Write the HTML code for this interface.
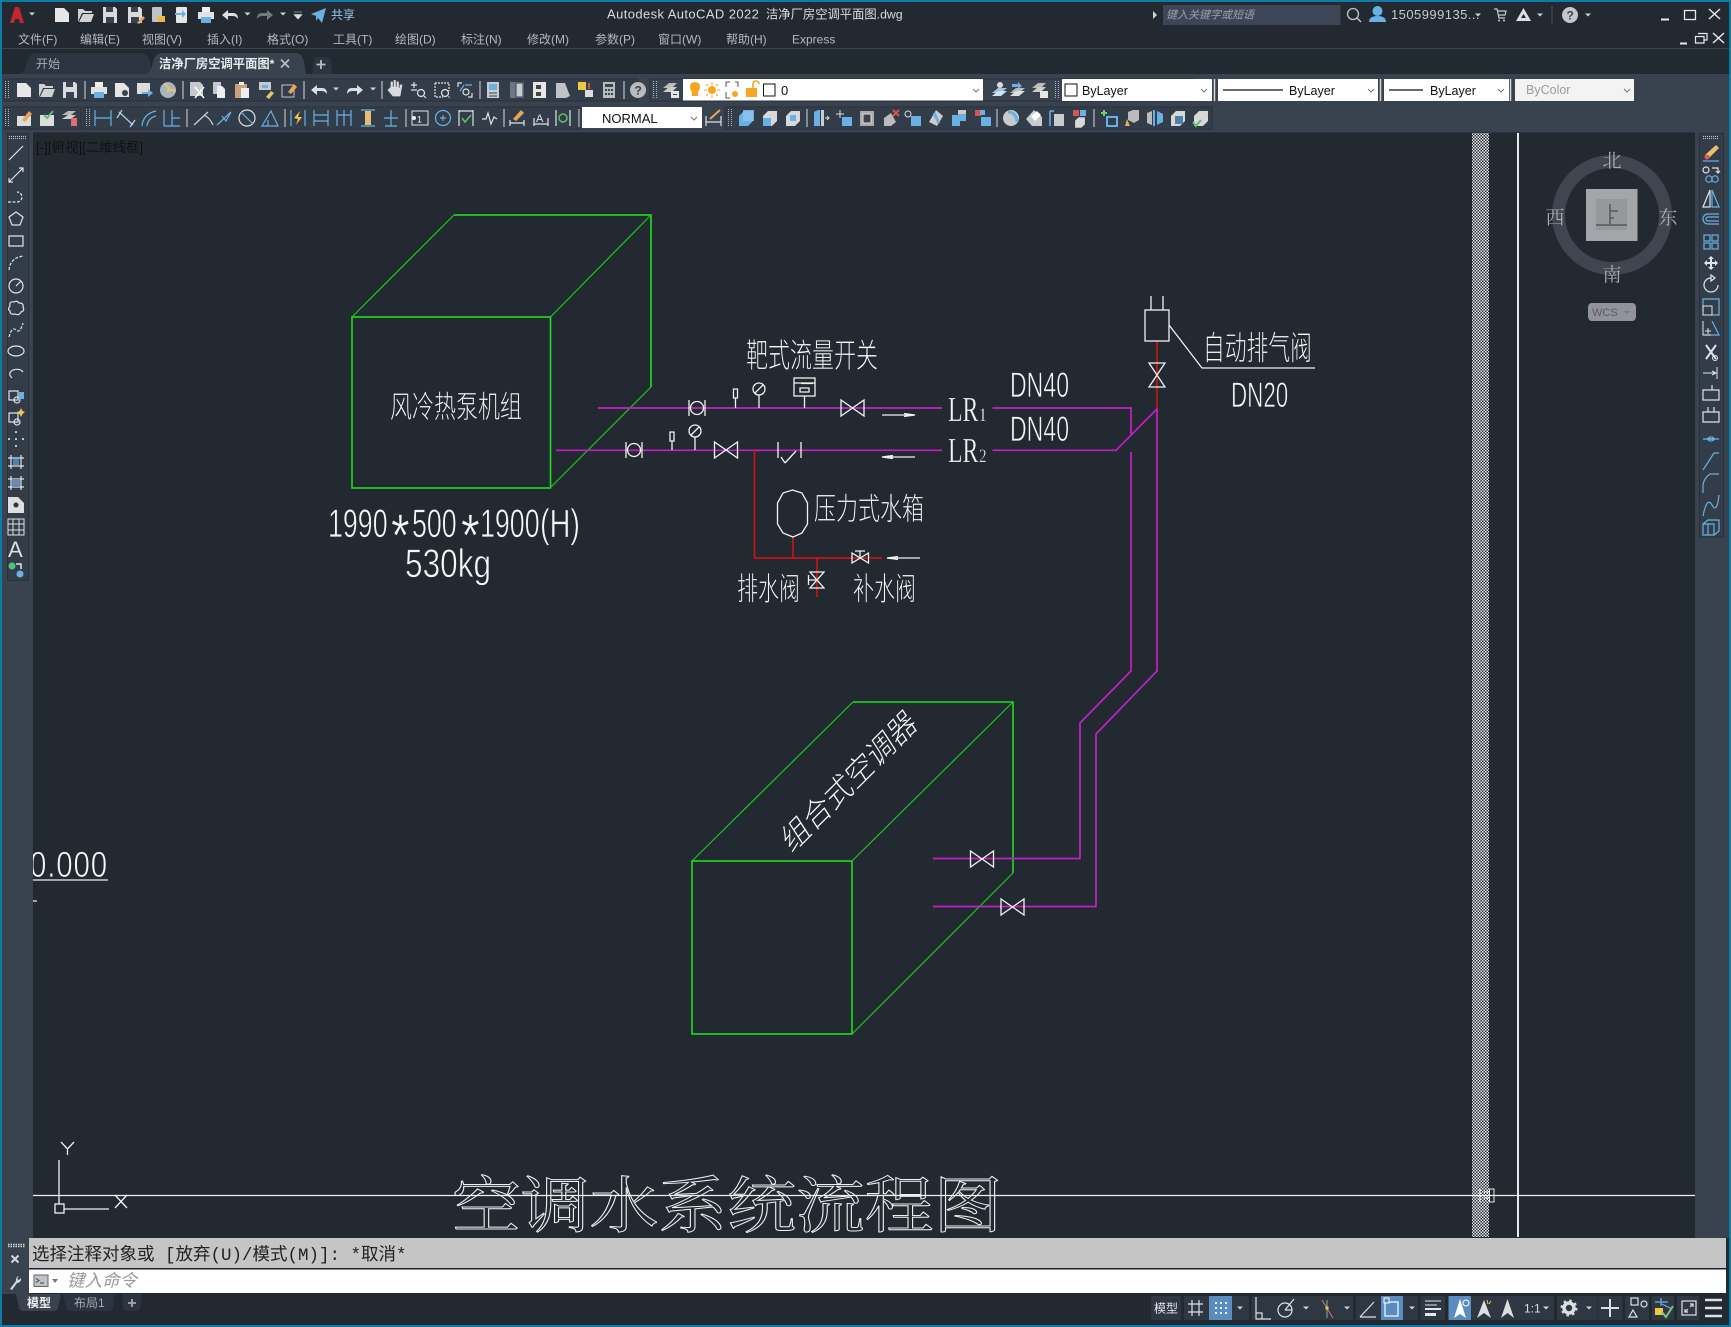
<!DOCTYPE html>
<html><head><meta charset="utf-8"><title>AutoCAD 2022</title>
<style>
html,body{margin:0;padding:0;background:#222931;width:1731px;height:1327px;overflow:hidden}
svg{display:block}
text{font-family:"Liberation Sans","Noto Sans CJK SC",sans-serif;white-space:pre}
.m{font-size:12px;fill:#b4b9c0}
.c{fill:#fff;font-family:"Noto Sans CJK SC","WenQuanYi Zen Hei",sans-serif;font-weight:200;stroke:#222931;stroke-width:.12}
.l{fill:#f6f6f6;font-family:"Liberation Sans",sans-serif;stroke:#222931;stroke-width:.7}
.s{fill:#f6f6f6;font-family:"Liberation Serif",serif;stroke:#222931;stroke-width:.3}
.i{fill:none;stroke:#dfe3e8;stroke-width:1.2}
.b{fill:none;stroke:#69b1e4;stroke-width:1.2}
.f{fill:#dcdee1}
.fb{fill:#69b1e4}
.g{fill:none;stroke:#1fdc1f;stroke-width:1.6}
.g2{fill:none;stroke:#1cc41c;stroke-width:1.2}
.p{fill:none;stroke:#c61ec6;stroke-width:1.7}
.r{fill:none;stroke:#c81414;stroke-width:1.7}
.w{fill:none;stroke:#f2f2f2;stroke-width:1.3}
.k{font-size:13.400px;fill:#111}
</style></head><body>
<svg xmlns="http://www.w3.org/2000/svg" width="1731" height="1327" viewBox="0 0 1731 1327">
<defs>
<pattern id="ht" width="3" height="3" patternUnits="userSpaceOnUse"><rect width="3" height="3" fill="#2a303a"/><rect width="1.5" height="1.5" fill="#e8e8e8"/><rect x="1.5" y="1.5" width="1.5" height="1.5" fill="#e8e8e8"/></pattern>
<path id="doc" d="M-7-7H2L7-2V7H-7Z" fill="#e6e6e6"/>
<path id="open" d="M-8 7V-6H-3L-1-4H6V-2H-4L-8 7ZM-7 7H5L8-1H-3Z" fill="#cfd1d4"/>
<g id="save"><path d="M-7-8H5L7-6V8H-7Z" fill="#d8dadd"/><rect x="-4" y="-8" width="7" height="5" fill="#39424f"/><rect x="-4" y="2" width="8" height="6" fill="#39424f"/></g>
<g id="print"><rect x="-4" y="-8" width="8" height="5" fill="#eee"/><rect x="-8" y="-3" width="16" height="7" fill="#e2e2e2"/><rect x="-5" y="2" width="10" height="6" fill="#69b1e4"/></g>
<path id="undo" d="M-8 0L-2-5V-2H3Q8-2 8 4Q6 1 3 1H-2V5Z" fill="#dcdee1"/>
<path id="redo" d="M8 0L2-5V-2H-3Q-8-2-8 4Q-6 1-3 1H2V5Z" fill="#dcdee1"/>
<path id="caret" d="M-3-1.5H3L0 1.5Z" fill="#cfd3d8"/>
<path id="chev" d="M-3-1L0 2L3-1" fill="none" stroke="#777"/>
<g id="grip"><path d="M-1.5-9V9M1.5-9V9" stroke="#aeb4bc" stroke-dasharray="1 1" fill="none"/></g>
<path id="cube" d="M-7-2L-2-7H7V3L2 8H-7Z" fill="#d8d8d8"/>
<path id="cubeb" d="M-7-2L-2-7H7V3L2 8H-7Z" fill="#69b1e4"/>
<path id="sep" d="M0-9V9" stroke="#d8dadd" stroke-width="1"/>
<g id="bow"><path d="M-11.5-8V8L11.5-8V8Z" fill="none" stroke="#f2f2f2" stroke-width="1.3"/></g>
</defs>

<rect width="1731" height="1327" fill="#222931"/>

<!-- CANVAS DRAWING -->
<g id="draw">
<rect x="1472" y="133" width="17" height="1104" fill="url(#ht)"/>
<path d="M1518 133V1237" stroke="#e8e8e8" stroke-width="2"/>
<path d="M33 1195.500H1695" stroke="#eee" stroke-width="1.300"/>
<rect x="1489.500" y="1189" width="4.500" height="13" fill="none" stroke="#eee"/>
<path d="M1480 1189V1202M1484 1192H1490M1484 1198H1490" stroke="#fff"/>

<!-- Box 1 -->
<rect x="352" y="317" width="198.500" height="171" class="g"/>
<path d="M352 317L454 215H651V387L550 488" class="g2"/>
<path d="M454 215H651V387" class="g"/>
<path d="M550.500 317L651 215" class="g2"/>
<!-- Box 2 -->
<rect x="692" y="861" width="160" height="173" class="g"/>
<path d="M692 861L853 702M852 861L1013 702M1013 873L852 1034" class="g2"/>
<path d="M853 702H1013V873" class="g"/>

<!-- Pipes -->
<path d="M598 408H942M992.500 408H1131V435M1131 452V671L1080 723V858.500H933" class="p"/>
<path d="M556 450.300H942M992.500 450.300H1116L1157 409V671L1096 734V906.500H933" class="p"/>
<path d="M754.500 450V558H882M793 537V558M817 558V597M1157 341V409" class="r"/>

<!-- Components -->
<g transform="translate(697,408)"><circle r="6.500" fill="#222931" class="w"/><path d="M-8-8V8M8-8V8" class="w"/></g>
<g transform="translate(634,450)"><circle r="6.500" fill="#222931" class="w"/><path d="M-8-8V8M8-8V8" class="w"/></g>
<g class="w">
<path d="M735.500 408V398M733.500 398V389H737.500V398ZM759 408V395M672 450V441M670 441V432H674V441ZM695 450V437"/>
<circle cx="759" cy="389" r="6"/><circle cx="695" cy="431" r="6"/>
<path d="M755 393L763 385M691 435L699 427"/>
<rect x="794" y="378" width="21" height="18"/><path d="M794 383H815M800 388H809V392H800ZM804.500 396V408M801 383.500H813"/>
<path d="M778 442V458M801 442V458M785 463L796 451M781 457L785 463"/>
<path d="M882 415H915M904 413.500L915 415L904 416.500M882 457H915M893 455.500L882 457L893 458.500M887 558H920M898 556.500L887 558L898 559.500"/>
<path d="M792.500 490L802 493L807.500 503V524L802 533L793 537L783 533L777.500 524V503L783 493Z"/>
<path d="M852 553V563L868.500 553V563ZM855 551H865M860 551V558"/>
<path d="M810 572H824L810 588H824L810 572ZM808.500 575V585M808.500 580H817"/>
<rect x="1145" y="310" width="24" height="31"/><path d="M1151 296V310M1163 296V310M1149 363H1165L1149 387H1165Z"/>
<path d="M1169 325L1202 368H1315"/>
</g>
<use href="#bow" x="852.500" y="408"/>
<use href="#bow" x="726" y="450"/>
<use href="#bow" x="982" y="859"/>
<use href="#bow" x="1012.500" y="907"/>

<!-- CAD text -->
<text class="c" transform="translate(746,367) scale(1,1.5)" font-size="22">靶式流量开关</text>
<text class="c" transform="translate(390,417.500) scale(1,1.4)" font-size="22">风冷热泵机组</text>
<text class="c" transform="translate(814,519.500) scale(1,1.4)" font-size="22">压力式水箱</text>
<text class="c" transform="translate(737,599.500) scale(1,1.5)" font-size="21">排水阀</text>
<text class="c" transform="translate(853,599.500) scale(1,1.5)" font-size="21">补水阀</text>
<text class="c" transform="translate(1203,359.500) scale(1,1.5)" font-size="21.800">自动排气阀</text>
<text class="c" transform="translate(855,790) rotate(-45) skewX(-12)" font-size="30" text-anchor="middle">组合式空调器</text>
<text class="l" transform="translate(1010,397) scale(.66,1)" font-size="35">DN40</text>
<text class="l" transform="translate(1010,441) scale(.66,1)" font-size="35">DN40</text>
<text class="l" transform="translate(1231,407) scale(.64,1)" font-size="35">DN20</text>
<text class="s" transform="translate(948,421) scale(.68,1)" font-size="35">LR</text>
<text class="s" transform="translate(979,421) scale(.8,1)" font-size="19">1</text>
<text class="s" transform="translate(948,462) scale(.68,1)" font-size="35">LR</text>
<text class="s" transform="translate(979,462) scale(.8,1)" font-size="19">2</text>
<text class="l" transform="translate(328,537) scale(.67,1)" font-size="40">1990</text>
<text class="l" transform="translate(391,556) scale(.8,1)" font-size="60">*</text>
<text class="l" transform="translate(412,537) scale(.67,1)" font-size="40">500</text>
<text class="l" transform="translate(461,556) scale(.8,1)" font-size="60">*</text>
<text class="l" transform="translate(480,537) scale(.67,1)" font-size="40">1900</text>
<text class="l" transform="translate(540,537) scale(.72,1)" font-size="40">(H)</text>
<text class="l" transform="translate(405,577) scale(.79,1)" font-size="40">530kg</text>
<text class="l" transform="translate(30,877) scale(.82,1)" font-size="36" letter-spacing="1">0.000</text>
<path d="M33 880H108M33 901H37" stroke="#eee" stroke-width="1.200"/>

<text transform="translate(452,1227) scale(1,.89)" font-size="68.800" fill="none" stroke="#f0f0f0" stroke-width="1.100" style="font-family:'Noto Serif CJK SC','Noto Sans CJK SC',serif">空调水系统流程图</text>

<!-- UCS -->
<path d="M59 1160V1204M64 1209H109M115 1195L127 1208M127 1195L115 1208M61 1142L67.500 1149L74 1142M67.500 1149V1155" class="w" stroke-width="1"/>
<rect x="55" y="1204" width="9" height="9" class="w"/>

<!-- Viewcube -->
<circle cx="1612" cy="215" r="53.500" fill="none" stroke="#3f4650" stroke-width="13"/>
<rect x="1586" y="189" width="51.500" height="52" fill="#a4a5a8"/>
<rect x="1596" y="199" width="31" height="31" fill="#97989c"/>
<path d="M1610 204V225M1596 225H1627M1610 211H1618M1610 218H1614" stroke="#55585e" stroke-width="1.500" fill="none"/>
<g font-size="19" text-anchor="middle">
<text x="1612" y="167" fill="#a8aaad" style="font-family:'Noto Serif CJK SC',serif">北</text>
<text x="1612" y="281" fill="#a8aaad" style="font-family:'Noto Serif CJK SC',serif">南</text>
<text x="1668" y="224" fill="#a8aaad" style="font-family:'Noto Serif CJK SC',serif">东</text>
<text x="1555" y="224" fill="#a8aaad" style="font-family:'Noto Serif CJK SC',serif">西</text>
</g>
<rect x="1588" y="303" width="48" height="18" rx="4" fill="#91929c"/>
<text x="1592" y="316" font-size="11" fill="#5b5d66">WCS</text>
<path d="M1623 311H1631L1627 314Z" fill="#7d7f88"/>

<text class="k" x="36" y="152">[-][俯视][二维线框]</text>
</g>

<!-- CHROME: frame & bars -->
<rect x="0" y="74" width="1731" height="59" fill="#39424f"/>
<rect x="2" y="133" width="31" height="1105" fill="#39424f"/>
<rect x="1695" y="133" width="34" height="1105" fill="#39424f"/>
<path d="M0 48.500H1731" stroke="#3d4551"/>
<rect x="33" y="132" width="1662" height="1" fill="#2c333e"/>

<!-- Title bar -->
<path d="M10 23L15 7H19L24 23H20L19 19H15L14 23Z" fill="#c4262b"/>
<use href="#caret" x="32" y="14"/>
<g transform="translate(62,15)"><use href="#doc"/></g>
<g transform="translate(86,15)"><use href="#open"/></g>
<g transform="translate(110,15)"><use href="#save"/></g>
<g transform="translate(135,15)"><use href="#save"/><path d="M2 8L8 1L10 3L4 9Z" fill="#e8a55a"/></g>
<g transform="translate(158,15)"><rect x="-6" y="-8" width="10" height="15" rx="1" fill="#bfc2c6"/><path d="M0 1H7V7H0Z" fill="#f3b73f"/></g>
<g transform="translate(182,15)"><rect x="-6" y="-8" width="11" height="16" rx="1" fill="#e6e6e6"/><path d="M-7-2H0V-5L4-1L0 3V0H-7Z" fill="#69b1e4"/></g>
<g transform="translate(206,15)"><use href="#print"/></g>
<g transform="translate(230,15)"><use href="#undo"/></g><use href="#caret" x="247.500" y="14"/>
<g transform="translate(265,15)" opacity=".45"><use href="#redo"/></g><use href="#caret" x="283" y="14"/>
<path d="M294 12H302M294 14.500H302L298 19Z" fill="#dcdee1" stroke="#dcdee1" stroke-width=".6"/>
<path d="M311 14L326 8L322 23L318 18L316 21V16Z" fill="#69b1e4"/>
<text x="331" y="19" font-size="12" fill="#98c8e8">共享</text>
<text x="607" y="18.500" font-size="13" fill="#d8dbdf" letter-spacing=".4">Autodesk AutoCAD 2022</text>
<text x="766" y="18.500" font-size="12.300" fill="#d8dbdf">洁净厂房空调平面图.dwg</text>
<path d="M1153 11L1157 15L1153 19Z" fill="#cfd3d8"/>
<rect x="1163" y="5" width="177.500" height="20" fill="#3d4656"/>
<text x="1166" y="18.500" font-size="11" font-style="italic" fill="#9aa1ab">键入关键字或短语</text>
<circle cx="1353" cy="14" r="5.500" fill="none" stroke="#c0c4c9" stroke-width="1.300"/><path d="M1357 18L1361 22" stroke="#c0c4c9" stroke-width="1.500"/>
<circle cx="1377.500" cy="11" r="5" class="fb"/><path d="M1369 22Q1369 16 1377.500 16Q1386 16 1386 22Z" class="fb"/>
<text x="1391" y="19" font-size="13" fill="#c6cacf" letter-spacing=".45">1505999135...</text>
<use href="#caret" x="1478" y="15"/>
<path d="M1494 9H1497L1499 18H1505M1498 11H1506L1505 15H1499" fill="none" stroke="#c6cacf" stroke-width="1.200"/><circle cx="1499" cy="20.500" r="1" fill="#c6cacf"/><circle cx="1504" cy="20.500" r="1" fill="#c6cacf"/>
<path d="M1523.500 8L1531 21H1516ZM1523.500 14L1521 18H1526Z" fill="#dcdee1" fill-rule="evenodd"/>
<use href="#caret" x="1540" y="15"/>
<path d="M1552 6V24" stroke="#4a525e"/>
<circle cx="1570" cy="15" r="8" fill="#c4c6ca"/><text x="1566.500" y="19.500" font-size="12" font-weight="bold" fill="#444">?</text>
<use href="#caret" x="1588" y="15"/>
<path d="M1661 19.500H1669" stroke="#e8e8e8" stroke-width="2"/>
<rect x="1684.500" y="10.500" width="11" height="9" fill="none" stroke="#e8e8e8" stroke-width="1.300"/>
<path d="M1709 9L1720 19M1720 9L1709 19" stroke="#e8e8e8" stroke-width="1.500"/>
<path d="M1680 43.500H1687" stroke="#e8e8e8" stroke-width="2"/>
<path d="M1698 33.500H1707V40H1704M1695.500 36.500H1704V43H1695.500Z" fill="none" stroke="#e8e8e8" stroke-width="1.200"/>
<path d="M1713 33L1724 43M1724 33L1713 43" stroke="#e8e8e8" stroke-width="1.500"/>

<!-- Menu -->
<text class="m" x="18" y="43.500">文件(F)</text><text class="m" x="80" y="43.500">编辑(E)</text>
<text class="m" x="142" y="43.500">视图(V)</text><text class="m" x="207" y="43.500">插入(I)</text>
<text class="m" x="267" y="43.500">格式(O)</text><text class="m" x="333" y="43.500">工具(T)</text>
<text class="m" x="395" y="43.500">绘图(D)</text><text class="m" x="461" y="43.500">标注(N)</text>
<text class="m" x="527" y="43.500">修改(M)</text><text class="m" x="595" y="43.500">参数(P)</text>
<text class="m" x="658" y="43.500">窗口(W)</text><text class="m" x="726" y="43.500">帮助(H)</text>
<text class="m" x="792" y="43.500">Express</text>

<!-- Doc tabs -->
<path d="M18 74Q24 74 26 66Q28 53 36 53H140Q148 53 150 62L152 74Z" fill="#2c3441"/>
<text x="36" y="68" font-size="12" fill="#a6abb2">开始</text>
<path d="M144 74Q150 74 152 66Q154 53 162 53H296Q302 53 304 62L306 74Z" fill="#39424f"/>
<text x="159" y="68" font-size="12.300" font-weight="bold" fill="#e8eaec">洁净厂房空调平面图*</text>
<path d="M281 59.500L289 67.500M289 59.500L281 67.500" stroke="#b8bcc2" stroke-width="1.800"/>
<path d="M312 74L314 60Q315 57 318 57H326Q330 57 331 60L332 74Z" fill="#2c3441"/>
<path d="M316.500 64.500H325.500M321 60V69" stroke="#b8bcc2" stroke-width="1.800"/>

<!-- Toolbar panels -->
<g fill="#333c49" stroke="#2a303a">
<rect x="4" y="79" width="634" height="22"/><rect x="4" y="107" width="77" height="22"/>
<rect x="84" y="107" width="496" height="22"/><rect x="725" y="107" width="487" height="22"/>
<rect x="650" y="79" width="546" height="22" fill="none"/>
</g>
<use href="#grip" x="7" y="90"/><use href="#grip" x="7" y="118"/><use href="#grip" x="88" y="118"/><use href="#grip" x="655" y="90"/><use href="#grip" x="730" y="118"/><use href="#grip" x="1057" y="90"/>

<!-- Row 1 icons -->
<g transform="translate(24,90)"><use href="#doc"/></g>
<g transform="translate(47,90)"><use href="#open"/></g>
<g transform="translate(70,90)"><use href="#save"/></g>
<use href="#sep" x="85" y="90"/>
<g transform="translate(99,90)"><use href="#print"/></g>
<g transform="translate(122,90)"><use href="#doc"/><circle cx="3" cy="3" r="3.500" fill="#39424f" stroke="#ddd"/></g>
<g transform="translate(144,90)"><rect x="-7" y="-7" width="13" height="11" fill="#ddd"/><path d="M-2 2H4V-1L9 3L4 7V4H-2Z" fill="#69b1e4"/></g>
<g transform="translate(168,90)"><circle r="8" fill="#a9b5bf"/><path d="M-4-6Q2-4 0 1Q6-2 7 2" stroke="#e9c46a" fill="none" stroke-width="2"/></g>
<use href="#sep" x="183" y="90"/>
<g transform="translate(197,90)"><path d="M-7-8H3L6-5V6H-7Z" fill="#c6c8cc"/><path d="M-2 8L7-3M7 8L-2-3" stroke="#fff" stroke-width="1.500"/></g>
<g transform="translate(219,90)"><path d="M-6-8H2V4H-6Z" fill="#c6c8cc"/><path d="M-2-4H3L6-1V8H-2Z" fill="#eee"/></g>
<g transform="translate(242,90)"><rect x="-7" y="-6" width="12" height="14" fill="#c9a277"/><rect x="-3" y="-8" width="5" height="3" fill="#eee"/><rect x="-1" y="-2" width="8" height="10" fill="#eee"/></g>
<g transform="translate(266,90)"><path d="M-7-8H5V0H-7Z" fill="#c6c8cc"/><rect x="-4" y="-5" width="6" height="3" fill="#69b1e4"/><path d="M0 7L5 1L8 3L3 9Z" fill="#e8c46a"/></g>
<g transform="translate(289,90)"><rect x="-7" y="-5" width="12" height="12" fill="none" stroke="#c6c8cc"/><path d="M-1 2L5-6L8-3L2 4Z" fill="#e8a55a"/></g>
<use href="#sep" x="304" y="90"/>
<g transform="translate(319,90)"><use href="#undo"/></g><use href="#caret" x="336" y="89"/>
<g transform="translate(355,90)"><use href="#redo"/></g><use href="#caret" x="373" y="89"/>
<use href="#sep" x="382" y="90"/>
<path d="M388 90L391 87V82H392.500V87H394V80.500H395.500V87H397V82H398.500V88H400V85L402 85L400 96H393Z" fill="#d8dade" stroke="#d8dade" stroke-width=".7"/>
<g transform="translate(418,90)" class="i"><path d="M-7-5H-1M-4-8V-2M-7 0H-1"/><circle cx="3" cy="3" r="3.500"/><path d="M6 6L8 8"/></g>
<g transform="translate(442,90)" class="i"><path d="M-7-7H7V1M-7-7V7H1" stroke-dasharray="2 1"/><circle cx="3" cy="3" r="3.500"/><path d="M6 6L8 8" stroke="#69b1e4"/></g>
<g transform="translate(465,90)" class="i"><path d="M-7-3V-7H-3M3 7H7V3"/><circle cx="1" cy="2" r="3"/><path d="M-5 1L-1-5M7-5H0" stroke="#69b1e4"/></g>
<use href="#sep" x="480" y="90"/>
<g transform="translate(493,90)"><rect x="-6" y="-8" width="12" height="16" fill="#c8cbcf"/><rect x="-4" y="-6" width="8" height="6" fill="#69b1e4"/><path d="M-4 3H4M-4 6H4" stroke="#39424f"/></g>
<g transform="translate(517,90)"><rect x="-7" y="-8" width="14" height="16" fill="#6f7782"/><path d="M-1 -7H6V7H-1Z" fill="#c8cbcf" stroke="#39424f"/></g>
<g transform="translate(540,90)"><rect x="-7" y="-8" width="13" height="16" fill="#e6e6e6"/><path d="M-4-5H1V-1H-4ZM-4 2H1V6H-4Z" fill="#444"/></g>
<g transform="translate(563,90)"><path d="M-7-7H2L7 6L3 8H-7Z" fill="#bfc2c6"/></g>
<g transform="translate(586,90)"><rect x="-8" y="-8" width="8" height="8" fill="#efc74a"/><rect x="-1" y="0" width="8" height="7" fill="#ddd"/><path d="M3 -7V-1" stroke="#c9534a" stroke-width="2"/></g>
<g transform="translate(609,90)"><rect x="-6" y="-8" width="12" height="16" fill="#b8bbbf"/><path d="M-4-6H4V-3H-4ZM-4-1H-2V1H-4ZM-1-1H1V1H-1ZM2-1H4V1H2ZM-4 3H-2V5H-4ZM-1 3H1V5H-1ZM2 3H4V5H2Z" fill="#39424f"/></g>
<use href="#sep" x="624" y="90"/>
<circle cx="638" cy="90" r="8" fill="#b8bbbf"/><text x="634.500" y="94.500" font-size="12" font-weight="bold" fill="#39424f">?</text>
<g transform="translate(671,90)"><path d="M-8-2L-2-7H6L1-2Z" fill="#bbb"/><path d="M-8 2L-2-3H6L1 2Z" fill="#ccc"/><rect x="0" y="1" width="8" height="7" fill="#e6e6e6"/><path d="M2 4.500H6" stroke="#444"/></g>

<!-- Layer combo -->
<rect x="683" y="79" width="300" height="21.500" fill="#fff"/>
<path d="M695 82Q700 82 700 87Q700 90 698 92V96H692V92Q690 90 690 87Q690 82 695 82Z" fill="#f6a623"/>
<circle cx="712" cy="90" r="4" fill="#f6a623"/><path d="M712 82V85M712 95V98M704 90H707M717 90H720M706 84L708 86M716 94L718 96M718 84L716 86M708 94L706 96" stroke="#f6a623"/>
<path d="M726 87V82H730M735 82H738V87M726 92V98H730" fill="none" stroke="#555"/><circle cx="735" cy="94" r="3" fill="#f6a623"/>
<rect x="746" y="88" width="11" height="9" fill="#f6a623"/><path d="M753 88V84Q753 81 756 81Q759 81 759 84" fill="none" stroke="#f6a623" stroke-width="1.600"/>
<rect x="763.500" y="84" width="11.500" height="12" fill="#fff" stroke="#111"/>
<text x="781" y="95" font-size="13" fill="#111">0</text>
<use href="#chev" x="976" y="90"/>
<g transform="translate(1000,90)"><path d="M-8 3L-2-2H7L1 3Z" fill="#9cc7ea"/><path d="M-8 6L-2 1H7L1 6Z" fill="#cfe2f2"/><circle cx="0" cy="-5" r="3" fill="#ddd"/></g>
<g transform="translate(1018,90)"><path d="M-8 3L-2-2H7L1 3Z" fill="#bbb"/><path d="M-8 6L-2 1H7L1 6Z" fill="#ddd"/><path d="M-6-6H0V-8L4-4L0-1V-3H-6Z" fill="#69b1e4"/></g>
<g transform="translate(1040,90)"><path d="M-8-2L-2-7H6L1-2Z" fill="#bbb"/><path d="M-8 2L-2-3H6L1 2Z" fill="#ccc"/><rect x="0" y="1" width="8" height="7" fill="#e6e6e6"/></g>

<!-- Property combos -->
<rect x="1062" y="79" width="150" height="22" fill="#fff"/>
<rect x="1065" y="84" width="12" height="12" fill="#fff" stroke="#111"/>
<text x="1082" y="95" font-size="12.500" fill="#111">ByLayer</text>
<use href="#chev" x="1204" y="90"/>
<path d="M1214.500 79V101M1380.500 79V101M1510.500 79V101" stroke="#d8dadd" stroke-width="1.500"/>
<rect x="1218" y="79" width="160" height="22" fill="#fff"/>
<path d="M1223 90H1283" stroke="#111" stroke-width="1.200"/>
<text x="1289" y="95" font-size="12.500" fill="#111">ByLayer</text>
<use href="#chev" x="1371" y="90"/>
<rect x="1384" y="79" width="125" height="22" fill="#fff"/>
<path d="M1389 90H1423" stroke="#111" stroke-width="1.200"/>
<text x="1430" y="95" font-size="12.500" fill="#111">ByLayer</text>
<use href="#chev" x="1501" y="90"/>
<rect x="1515" y="79" width="119" height="22" fill="#f3f3f3"/>
<text x="1526" y="94" font-size="12.500" fill="#9c9c9c">ByColor</text>
<use href="#chev" x="1627" y="90"/>

<!-- Row 2 icons -->
<g transform="translate(24,118)"><path d="M-7-2H7V8H-7Z" fill="#ddd"/><path d="M-2 2L5-7L8-4L1 4Z" fill="#e8a55a"/></g>
<g transform="translate(47,118)"><path d="M-7-3H7V8H-7Z" fill="#ddd"/><path d="M-3 -3L0 0L6-7" stroke="#5fbf6a" fill="none" stroke-width="2"/></g>
<g transform="translate(70,118)"><path d="M-8-3L-2-7H6L1-3Z" fill="#bbb"/><path d="M-8 1L-2-3H6L1 1Z" fill="#ccc"/><rect x="1" y="0" width="6" height="8" fill="#e07070"/></g>
<g class="b">
<path d="M95 110V126M111 110V126M95 118H111"/>
<path d="M119 112L133 125M117 118L122 110M130 127L135 120" stroke="#b8d6ee"/>
<path d="M142 126Q143 114 156 111M147 126Q148 118 156 116" />
<path d="M164 126H180M172 126V110M164 110V126M172 118H180"/>
<path d="M194 125L208 112M204 115Q210 118 213 125" stroke="#cfd3d8"/>
<path d="M217 125L231 112L226 121L222 116" />
<circle cx="247" cy="118" r="8" stroke="#dfe3e8"/><path d="M241 112L253 124"/>
<path d="M262 126H278L271 111ZM268 120V126" />
<path d="M291 110V126M305 110V126"/>
<path d="M314 110V126M328 110V126M314 115H328M314 121H328" />
<path d="M337 110V126M344 110V126M351 110V126M337 115H351"/>
<path d="M361 110H375M361 126H375"/>
<path d="M384 118H398M391 110V126M385 126H397"/>
</g>
<path d="M294 118L300 111L298 117H302L296 125L298 119Z" fill="#efc74a"/>
<rect x="365" y="111" width="6" height="14" fill="#e0c070"/>
<rect x="412" y="111" width="16" height="14" fill="none" stroke="#dfe3e8"/><text x="417" y="122.500" font-size="9" fill="#eee">1</text><circle cx="414" cy="118" r="2" fill="#eee"/>
<circle cx="443" cy="118" r="7.500" class="b"/><path d="M440 118H446M443 115V121" class="b"/>
<path d="M459 110V126M473 110V126M459 111H473" class="i"/><path d="M462 118L465 122L471 115" stroke="#5fbf6a" fill="none" stroke-width="1.500"/>
<path d="M482 119L486 119L488 113L491 124L494 117L497 119" class="i"/>
<path d="M510 126V120M524 126V120M510 123H524" class="i"/><path d="M513 119L521 110L524 113L516 121Z" fill="#e8a55a"/>
<path d="M534 126V118M548 126V118M534 124H548" class="i"/><text x="536" y="122" font-size="11" fill="#dfe3e8">A</text>
<path d="M556 110V126M570 110V126" class="i"/><circle cx="563" cy="118" r="4" fill="none" stroke="#5fbf6a" stroke-width="1.500"/>
<use href="#sep" x="187" y="118"/><use href="#sep" x="285" y="118"/><use href="#sep" x="406" y="118"/><use href="#sep" x="504" y="118"/><use href="#sep" x="579" y="118"/>

<rect x="582" y="107" width="120" height="21" fill="#fff"/>
<text x="602" y="123" font-size="13" fill="#111">NORMAL</text>
<use href="#chev" x="694" y="118"/>
<path d="M706 116V126M721 116V126M706 122H721" class="i"/><path d="M710 119L720 110" stroke="#e8a55a" stroke-width="2"/>

<!-- 3D row -->
<g transform="translate(746,118)"><use href="#cubeb"/><path d="M-3-8H8V3H-3Z" fill="#8ec4ec" opacity=".8"/></g>
<g transform="translate(770,118)"><use href="#cube"/><path d="M-7 0H1V8H-7Z" fill="#69b1e4"/></g>
<g transform="translate(793,118)"><use href="#cube"/><path d="M-3-3H3V3H-3Z" fill="#69b1e4"/></g>
<use href="#sep" x="807" y="118"/>
<g transform="translate(821,118)"><path d="M-7 8V-6Q-4-8-1-8V8Z" fill="#69b1e4"/><path d="M0-8H3V8H0Z" fill="#ccc"/><path d="M4 0H8M6-2L8 0L6 2" stroke="#ddd" fill="none"/></g>
<g transform="translate(844,118)"><path d="M-8-4H0M-4-8V0" stroke="#ddd"/><rect x="-2" y="-1" width="10" height="9" fill="#69b1e4"/></g>
<g transform="translate(867,118)"><rect x="-7" y="-7" width="14" height="15" fill="#aaa"/><rect x="-4" y="-4" width="8" height="9" fill="#39424f" stroke="#ddd"/></g>
<g transform="translate(891,118)"><path d="M-7 8V0L0-5L5 4L0 8Z" fill="#bbb"/><path d="M2-8L8-2M8-8L2-2" stroke="#d9534f" stroke-width="2"/></g>
<g transform="translate(913,118)"><circle cx="-5" cy="-4" r="3" fill="none" stroke="#ddd"/><rect x="-2" y="-2" width="10" height="10" fill="#69b1e4"/></g>
<g transform="translate(936,118)"><path d="M-7 4L0-8L7-2L1 8Z" fill="#ccc"/><path d="M-2-5L3 5" stroke="#69b1e4" stroke-width="3"/></g>
<g transform="translate(959,118)"><path d="M-7 8V-3H-1V-8H7V3H1V8Z" fill="#69b1e4"/><path d="M-1-8H7V-4H-1Z" fill="#ccc"/></g>
<g transform="translate(983,118)"><rect x="-8" y="-8" width="6" height="6" fill="#d9534f"/><rect x="-3" y="-8" width="5" height="5" fill="#69b1e4"/><rect x="-2" y="-1" width="10" height="9" fill="#69b1e4"/></g>
<use href="#sep" x="997" y="118"/>
<g transform="translate(1011,118)"><circle r="8" fill="#c8cacd"/><path d="M-3-6Q5-6 6 4" stroke="#69b1e4" stroke-width="3" fill="none"/></g>
<g transform="translate(1034,118)"><path d="M-8 1L0-8L8-1V8H-2Z" fill="#c8cacd"/><path d="M-3-2L3-7L7-3L1 3Z" fill="#fff"/></g>
<g transform="translate(1057,118)"><path d="M-3-4H7V8H-3Z" fill="#ccc"/><path d="M-7 8V-7M-7-7H-3" stroke="#69b1e4" stroke-width="1.500" fill="none"/></g>
<g transform="translate(1080,118)"><rect x="-7" y="-8" width="6" height="6" fill="#d9534f"/><rect x="0" y="-8" width="6" height="6" fill="#69b1e4"/><use href="#cube" transform="scale(.7) translate(0,6)"/></g>
<use href="#sep" x="1094" y="118"/>
<g transform="translate(1109,118)"><rect x="-2" y="-1" width="10" height="9" fill="none" stroke="#69b1e4" stroke-width="2"/><path d="M-8-5H-2M-5-8V-2" stroke="#6fd07a" stroke-width="2"/></g>
<g transform="translate(1132,118)"><path d="M-4 2V-6L1-8H7V2L2 5Z" fill="#bbb"/><path d="M-5 1L-7 8H-2Z" fill="#e0b050"/></g>
<g transform="translate(1155,118)"><path d="M-8-5L-3-7V7L-8 5Z" fill="#bbb"/><path d="M-1-8V8" stroke="#69b1e4" stroke-width="2"/><path d="M2-7L8-4V4L2 7Z" fill="#69b1e4"/></g>
<g transform="translate(1178,118)"><use href="#cube"/><rect x="-3" y="-2" width="8" height="8" fill="#4f80a8"/></g>
<g transform="translate(1201,118)"><use href="#cube"/><path d="M-8 4L-5 8L0 2" stroke="#5fbf6a" fill="none" stroke-width="2"/></g>

<!-- Left toolbar -->
<rect x="7.500" y="133.500" width="21" height="447" fill="#333c49" stroke="#2a303a"/>
<path d="M9 136.500H26M9 138.500H26" stroke="#c4c8cd" stroke-dasharray="1 1"/>
<g class="i">
<path d="M9 160L23 146"/>
<path d="M9 182L23 168M9 178V182H13M19 168H23V172"/>
<path d="M8 202H17A5 5 0 0 0 17 192" stroke-dasharray="3 1.500"/>
<path d="M16 212L23 217L20 225H12L9 217Z"/>
<path d="M9 236H23V246H9Z"/>
<path d="M9 270Q10 258 23 256" stroke-dasharray="3 1.500"/>
<circle cx="16" cy="286" r="7"/><path d="M16 286L21 281"/>
<path d="M10 306Q9 301 14 302Q17 300 19 303Q24 303 23 307Q25 311 21 312Q19 316 15 314Q10 315 10 311Q7 309 10 306Z"/>
<path d="M9 337Q12 326 16 330T23 323" stroke-dasharray="3 1.500"/>
<ellipse cx="16" cy="351" rx="8" ry="5"/>
<path d="M12 378Q7 373 13 370Q20 368 23 372"/>
<path d="M9 391H18V400H9Z"/><circle cx="17" cy="400" r="3"/>
<path d="M9 413H18V422H9Z"/><circle cx="17" cy="422" r="3"/>
<path d="M16 432V432.100M9 439V439.100M23 439V439.100M16 439V439.100M16 446V446.100" stroke-linecap="round" stroke-width="2"/>
<path d="M11 455V469M21 455V469M8 458H24M8 466H24"/>
<path d="M11 476V490M21 476V490M8 479H24M8 487H24"/>
<path d="M8 519H24V535H8ZM8 524H24M8 530H24M13 519V535M19 519V535" stroke-width="1"/>
</g>
<path d="M19 392H24V399H19Z" class="fb"/>
<path d="M21 408L22.500 411L25 412L22.500 414L21 417L19.500 414L17 412L19.500 411Z" fill="#efc74a"/>
<path d="M13 458H19V466H13Z" class="fb" opacity=".6"/>
<rect x="12" y="479" width="8" height="8" fill="#6d8ba8"/>
<path d="M8 497H18L24 503V513H8Z" fill="#dcdee1"/><circle cx="16" cy="505" r="2.500" fill="#333"/>
<text x="8" y="557" font-size="22" fill="#dcdee1">A</text>
<circle cx="12" cy="566" r="3.500" fill="#4cc77a"/><circle cx="20" cy="574" r="3.500" class="fb"/><path d="M16 564H21V569" stroke="#fff" fill="none" stroke-width="1.300"/>

<!-- Right toolbar -->
<rect x="1699.500" y="133.500" width="24" height="403.500" fill="#333c49" stroke="#2a303a"/>
<path d="M1703 136.500H1718M1703 138.500H1718" stroke="#c4c8cd" stroke-dasharray="1 1"/>
<path d="M1705 155L1716 145L1719 148L1708 159Z" fill="#e8c070"/><circle cx="1707" cy="157" r="2.500" fill="#e05a5a"/><path d="M1703 161H1719" class="b"/>
<g class="b">
<circle cx="1715" cy="179" r="3.200"/><circle cx="1709" cy="179" r="3.200"/>
<path d="M1703 207L1710 190V207Z" stroke="#dfe3e8"/><path d="M1712 190L1719 207H1712Z"/>
<path d="M1719 214H1708A5 5 0 0 0 1708 224H1719M1719 217H1708A2 2 0 0 0 1708 221H1719"/>
<rect x="1704" y="235" width="6" height="6"/><rect x="1712" y="235" width="6" height="6"/><rect x="1704" y="243" width="6" height="6"/><rect x="1712" y="243" width="6" height="6"/>
<path d="M1703 312V299H1719V315H1711"/>
<path d="M1712 321L1719 335H1703"/>
<path d="M1703 439H1719M1707 439L1710 437V441ZM1715 439L1712 437V441Z"/>
<path d="M1703 470L1714 453H1719"/>
<path d="M1703 493V485Q1704 478 1710 474H1719"/>
<path d="M1703 516Q1707 496 1712 505T1719 495"/>
<path d="M1703 524V535H1714V524ZM1703 524L1708 520H1719V531L1714 535M1708 524V535"/>
</g>
<circle cx="1706" cy="170" r="3" fill="none" stroke="#dfe3e8" stroke-width="1.200"/>
<path d="M1712 168H1718V173M1716 171L1718 173L1720 171" stroke="#dfe3e8" fill="none" stroke-width="1.200"/>
<path d="M1711 256L1708 259H1710V262H1707V260L1704 263L1707 266V264H1710V267H1708L1711 270L1714 267H1712V264H1715V266L1718 263L1715 260V262H1712V259H1714Z" fill="#dfe3e8"/>
<path d="M1718 285A7 7 0 1 1 1711 278M1711 275V281L1715 278Z" fill="none" stroke="#dfe3e8" stroke-width="1.200"/>
<rect x="1703" y="306" width="9" height="9" fill="none" stroke="#dfe3e8"/>
<path d="M1703 321V335H1711" fill="none" stroke="#dfe3e8"/>
<path d="M1705 331H1711M1708 328V334" stroke="#dfe3e8"/>
<path d="M1706 345L1716 359M1716 345L1706 359" stroke="#dfe3e8" stroke-width="2"/><circle cx="1715" cy="358" r="2.500" fill="none" stroke="#dfe3e8"/>
<path d="M1703 373H1717M1717 367V379M1712 371L1716 373L1712 375" stroke="#dfe3e8" fill="none"/>
<path d="M1703 390H1719V400H1703ZM1712 390V385" class="i"/>
<path d="M1703 412H1719V422H1703ZM1708 412V407M1714 412V407" class="i"/>

<!-- Command line -->
<rect x="2" y="1238" width="27" height="56" fill="#39424f"/>
<path d="M8 1244.500H25M8 1246.500H25" stroke="#d0d3d7" stroke-width="1.500" stroke-dasharray="1.500 1"/>
<path d="M11.500 1255.500L18.500 1262.500M18.500 1255.500L11.500 1262.500" stroke="#d4d7db" stroke-width="2"/>
<path d="M10 1289L16 1281A4 4 0 0 1 19 1276L17 1279L19 1280L21 1278A4 4 0 0 1 17 1283L12 1290Z" fill="#d4d7db"/>
<rect x="29" y="1238" width="1697" height="30" fill="#c5c5c5"/>
<rect x="29" y="1268" width="1697" height="1.500" fill="#1c2026"/>
<rect x="29" y="1269.500" width="1697" height="23.500" fill="#fff"/>
<text x="32" y="1260" font-size="17.500" fill="#222" style="font-family:'Liberation Mono','Noto Sans CJK SC',monospace">选择注释对象或 [放弃(U)/模式(M)]: *取消*</text>
<rect x="34" y="1275" width="14" height="11.500" fill="#bfc2c6" stroke="#666"/>
<path d="M36 1278.500L39 1280.500L36 1282.500M40 1283H44" stroke="#444" fill="none"/>
<path d="M52 1279H58L55 1283Z" fill="#777"/>
<text x="67" y="1286.500" font-size="17.500" font-style="italic" fill="#9a9a9a">键入命令</text>

<!-- Bottom tabs -->
<path d="M16 1294H61L58 1308Q57 1311 53 1311H24Q20 1311 19 1308Z" fill="#39424f"/>
<text x="27" y="1307" font-size="12" font-weight="bold" fill="#eee">模型</text>
<path d="M63 1294H115L113 1308Q112 1311 108 1311H71Q67 1311 66 1308Z" fill="#2c3441"/>
<text x="74" y="1307" font-size="12" fill="#a6abb2">布局1</text>
<path d="M122 1294H142L140 1308Q139 1311 135 1311H127Q124 1311 123 1308Z" fill="#2c3441"/>
<path d="M128 1303H136M132 1299V1307" stroke="#a6abb2" stroke-width="1.800"/>

<!-- Status bar -->
<g fill="#2f3743">
<rect x="1151" y="1296" width="30" height="24"/><rect x="1184" y="1296" width="65" height="24"/>
<rect x="1251.500" y="1296" width="101.500" height="24"/><rect x="1356" y="1296" width="62" height="24"/>
<rect x="1420.500" y="1296" width="24.500" height="24"/><rect x="1448.500" y="1296" width="105.500" height="24"/>
<rect x="1557" y="1296" width="40" height="24"/><rect x="1597.500" y="1296" width="25" height="24"/>
<rect x="1625" y="1296" width="24" height="24"/><rect x="1652" y="1296" width="22" height="24"/>
<rect x="1677" y="1296" width="22" height="24"/>
</g>
<rect x="1209" y="1296" width="23" height="24" fill="#5b8cc0"/>
<rect x="1381" y="1296" width="22" height="24" fill="#5b8cc0"/>
<rect x="1448.500" y="1296" width="22.500" height="24" fill="#5b8cc0"/>
<text x="1154" y="1312.500" font-size="12" fill="#e4e6e8">模型</text>
<path d="M1188 1304H1203M1188 1312H1203M1192 1300V1316M1199 1300V1316" class="i"/>
<path d="M1215 1303H1227M1215 1308H1227M1215 1313H1227" stroke="#e8f0f8" stroke-width="2" stroke-dasharray="2 3"/>
<use href="#caret" x="1240" y="1308"/>
<path d="M1256 1297V1319H1271M1256 1313H1262V1319" class="i"/>
<circle cx="1285" cy="1310" r="7" class="i"/><path d="M1285 1310L1294 1299M1285 1310H1292" class="i"/>
<use href="#caret" x="1306" y="1308"/>
<path d="M1322 1300L1333 1318" stroke="#d07a7a"/><path d="M1327 1300V1318" stroke="#6fc08a"/><rect x="1325.500" y="1306.500" width="3" height="3" fill="#efc74a"/>
<use href="#caret" x="1347" y="1308"/>
<path d="M1360 1317L1374 1302M1360 1317H1376" class="i"/>
<rect x="1385" y="1302" width="13" height="14" fill="none" stroke="#fff" stroke-width="1.200"/><rect x="1384" y="1298" width="5" height="5" fill="#5b8cc0" stroke="#fff"/>
<use href="#caret" x="1412" y="1308"/>
<path d="M1425 1301H1441M1425 1305H1437" stroke="#e4e6e8"/><path d="M1425 1309H1441" stroke="#e4e6e8" stroke-width="2"/><path d="M1425 1314.500H1436" stroke="#e4e6e8" stroke-width="3"/>
<path d="M1460 1299L1466 1318L1460 1314L1454 1318Z" fill="#fff"/><circle cx="1466" cy="1303" r="3" fill="none" stroke="#fff"/>
<path d="M1484 1300L1491 1318L1484 1313L1477 1318Z" fill="#dcdee1"/><path d="M1491 1301L1489 1304M1487 1300L1488 1304" stroke="#efc74a"/>
<path d="M1507.500 1299L1514 1318L1507.500 1313L1501 1318Z" fill="#dcdee1"/>
<text x="1524" y="1312.500" font-size="12" fill="#dcdee1">1:1</text><use href="#caret" x="1546" y="1308"/>
<circle cx="1569" cy="1308" r="5" fill="none" stroke="#dcdee1" stroke-width="3.500"/><circle cx="1569" cy="1308" r="7.500" fill="none" stroke="#dcdee1" stroke-width="2" stroke-dasharray="2.500 3.400"/>
<use href="#caret" x="1589" y="1308"/>
<path d="M1610 1299V1317M1601 1308H1619" stroke="#dcdee1" stroke-width="2"/>
<rect x="1631" y="1298" width="7" height="7" class="i"/><circle cx="1644" cy="1304" r="3" class="i"/><path d="M1633 1310L1637 1317H1629Z" class="i"/>
<path d="M1655 1302H1668M1661 1298V1306" class="b"/><rect x="1655" y="1308" width="8" height="7" fill="#efc74a"/><path d="M1662 1312L1666 1317L1673 1306" stroke="#7ac77a" fill="none" stroke-width="2"/><path d="M1662 1304L1672 1309" class="b"/>
<rect x="1682" y="1301" width="14" height="14" class="i"/><path d="M1685 1312L1688 1309M1693 1304L1690 1307M1685 1309V1312H1688M1690 1304H1693V1307" class="i"/>
<path d="M1705 1300H1722M1705 1308H1722M1705 1316H1722" stroke="#dcdee1" stroke-width="2.500"/>

<!-- Window frame -->
<rect x="0" y="0" width="1731" height="2" fill="#0e7aa6"/>
<rect x="0" y="0" width="2" height="1327" fill="#0e7aa6"/>
<rect x="1729" y="0" width="2" height="1327" fill="#0e7aa6"/>
<rect x="0" y="1325" width="1731" height="2" fill="#0e7aa6"/>
</svg>
</body></html>
